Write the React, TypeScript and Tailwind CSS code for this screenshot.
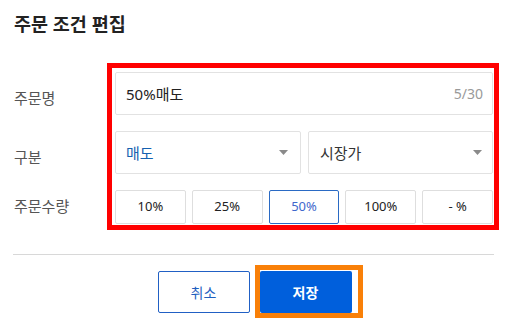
import { useState } from 'react'

const ratios = ['10%', '25%', '50%', '100%', '- %']

function Caret() {
  return (
    <svg width="9" height="5" viewBox="0 0 9 5" className="shrink-0">
      <path d="M0 0h9L4.5 5z" fill="#8a8a8a" />
    </svg>
  )
}

export default function App() {
  const [ratio, setRatio] = useState('50%')

  return (
    <div className="w-[518px] h-[323px] overflow-hidden bg-white pl-[14px] pr-[25px] pt-[13px] font-['Noto_Sans','Noto_Sans_CJK_KR',sans-serif]">
      <h1 className="text-[18.5px] font-bold leading-[22px] text-[#222]">주문 조건 편집</h1>

      <div className="mt-[37px] flex">
        {/* labels */}
        <div className="w-[101px] flex flex-col gap-4 text-[15px] leading-5 text-[#555]">
          <div className="h-[43px] pt-[16px]">주문명</div>
          <div className="h-[43px] pt-[16px]">구분</div>
          <div className="h-[34px] pt-[6px]">주문수량</div>
        </div>

        {/* fields */}
        <div className="relative flex-1 flex flex-col gap-4">
          <div className="h-[43px] flex items-center justify-between rounded-[2px] border border-[#e2e2e2] pl-[10px] pr-[9px]">
            <span className="text-[15px] leading-5 text-[#222]">50%매도</span>
            <span className="text-[14px] leading-5 text-[#9a9a9a]">5/30</span>
          </div>

          <div className="h-[43px] flex gap-[7px]">
            <div className="flex-1 flex items-center justify-between rounded-[2px] border border-[#e2e2e2] pl-[10px] pr-[12px]">
              <span className="text-[15px] leading-5 text-[#1561b0]">매도</span>
              <Caret />
            </div>
            <div className="flex-1 flex items-center justify-between rounded-[2px] border border-[#e2e2e2] pl-[11px] pr-[10px]">
              <span className="text-[15px] leading-5 text-[#333]">시장가</span>
              <Caret />
            </div>
          </div>

          <div className="h-[34px] flex gap-[6px]">
            {ratios.map((r) => (
              <button
                key={r}
                onClick={() => setRatio(r)}
                className={
                  r === ratio
                    ? 'flex-1 rounded-[2px] border border-[#2a6ac4] text-[13px] text-[#3f68cc]'
                    : 'flex-1 rounded-[2px] border border-[#dedede] text-[13px] text-[#222]'
                }
              >
                {r}
              </button>
            ))}
          </div>

          {/* annotation */}
          <div className="pointer-events-none absolute -left-[8px] -top-[9px] -right-[6px] -bottom-[6px] border-[5px] border-[#ff0000]" />
        </div>
      </div>

      <div className="mt-[30px] -mx-px h-px bg-[#d8d8d8]" />

      <div className="mt-[16px] flex justify-center gap-[10px] pl-[2px]">
        <button className="w-[92px] h-[42px] rounded-[2px] border border-[#2160c4] text-[14px] text-[#1f5fbf]">
          취소
        </button>
        <div className="relative">
          <button className="w-[92px] h-[42px] rounded-[2px] bg-[#005fdc] text-[14px] font-bold text-white">
            저장
          </button>
          <div className="pointer-events-none absolute -left-[5px] -top-[6px] -right-[11px] -bottom-[5px] border-[5px] border-[#f98008]" />
        </div>
      </div>
    </div>
  )
}
